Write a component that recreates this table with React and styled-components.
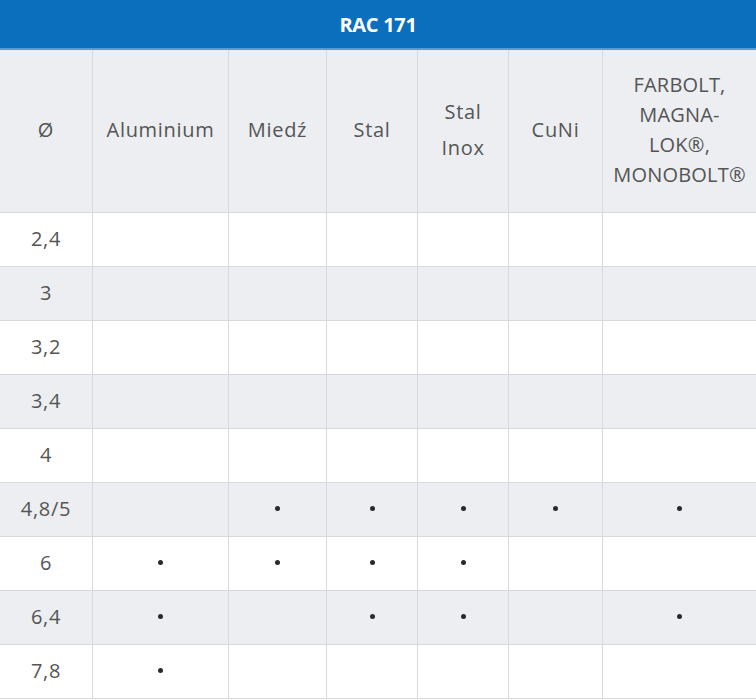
import React from "react";
import styled, { createGlobalStyle } from "styled-components";

const Global = createGlobalStyle`
  html, body { margin: 0; padding: 0; background: #fff; }
  body { font-family: "Open Sans", "Noto Sans", sans-serif; }
`;

const Page = styled.div`
  width: 756px;
  overflow: hidden;
`;

const TitleBar = styled.div`
  height: 48px;
  background: #0b6fbd;
  border-bottom: 2px solid #5a9bd3;
  color: #fff;
  font-weight: 700;
  font-size: 20px;
  letter-spacing: -0.3px;
  display: flex;
  align-items: center;
  justify-content: center;
`;

const Grid = styled.div`
  display: grid;
  grid-template-columns: 93px 136px 98px 91px 91px 94px 153px;
`;

const Cell = styled.div`
  height: ${(p) => (p.$head ? "163px" : "54px")};
  box-sizing: border-box;
  background: ${(p) => (p.$shade ? "#eceef1" : "#ffffff")};
  border-right: 1px solid #d7dadd;
  border-bottom: 1px solid #d7dadd;
  &:nth-child(7n) { border-right: none; }
  display: flex;
  align-items: center;
  justify-content: center;
  text-align: center;
  color: #555;
  font-size: 20px;
  letter-spacing: ${(p) => p.$ls || "0.7px"};
  line-height: ${(p) => p.$lh || "36px"};
  padding-bottom: 2px;
`;

const Dot = styled.span`
  width: 5px;
  height: 5px;
  border-radius: 50%;
  background: #2a2a2a;
`;

const headers = [
  { t: ["Ø"] },
  { t: ["Aluminium"] },
  { t: ["Miedź"] },
  { t: ["Stal"] },
  { t: ["Stal", "Inox"] },
  { t: ["CuNi"] },
  { t: ["FARBOLT,", "MAGNA-", "LOK®,", "MONOBOLT®"], lh: "30px", ls: "0.2px" },
];

const rows = [
  ["2,4", []],
  ["3", []],
  ["3,2", []],
  ["3,4", []],
  ["4", []],
  ["4,8/5", [2, 3, 4, 5, 6]],
  ["6", [1, 2, 3, 4]],
  ["6,4", [1, 3, 4, 6]],
  ["7,8", [1]],
];

export default function App() {
  return (
    <Page>
      <Global />
      <TitleBar>RAC 171</TitleBar>
      <Grid>
        {headers.map((h, i) => (
          <Cell key={"h" + i} $head $shade $lh={h.lh} $ls={h.ls}>
            <div>
              {h.t.map((l, j) => (
                <div key={j}>{l}</div>
              ))}
            </div>
          </Cell>
        ))}
        {rows.map(([label, dots], r) => (
          <React.Fragment key={r}>
            <Cell $shade={r % 2 === 1}>{label}</Cell>
            {[1, 2, 3, 4, 5, 6].map((c) => (
              <Cell key={c} $shade={r % 2 === 1}>
                {dots.includes(c) ? <Dot /> : null}
              </Cell>
            ))}
          </React.Fragment>
        ))}
      </Grid>
    </Page>
  );
}
